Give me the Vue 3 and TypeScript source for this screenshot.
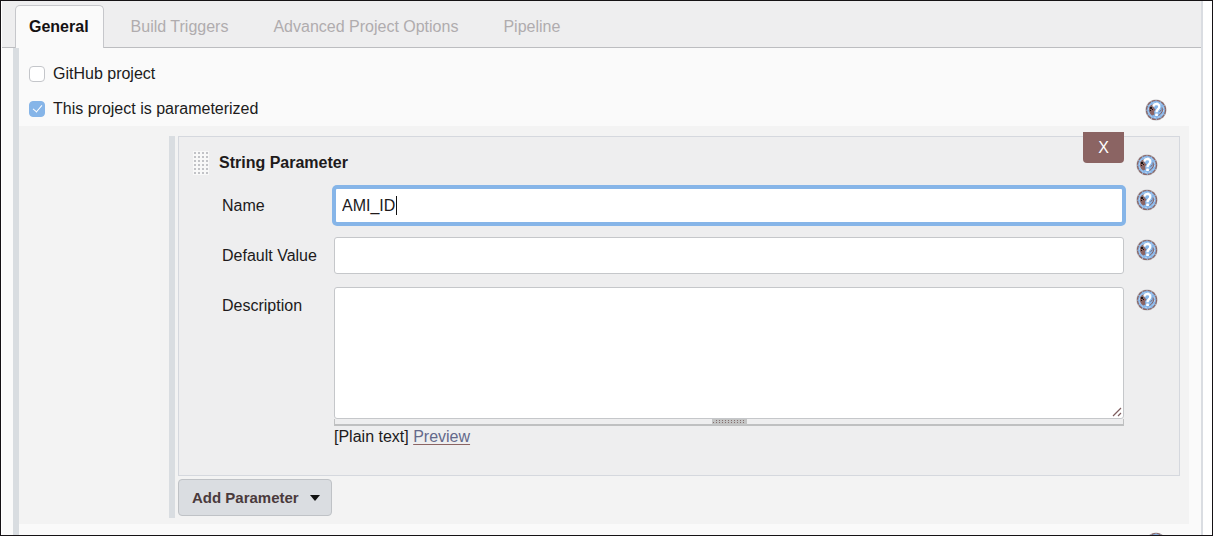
<script setup lang="ts">
import { ref } from 'vue'

interface Tab {
  id: string
  label: string
}

const tabs: Tab[] = [
  { id: 'general', label: 'General' },
  { id: 'triggers', label: 'Build Triggers' },
  { id: 'advanced', label: 'Advanced Project Options' },
  { id: 'pipeline', label: 'Pipeline' },
]

const activeTab = ref('general')
const githubProject = ref(false)
const parameterized = ref(true)
const paramName = ref('AMI_ID')
const defaultValue = ref('')
const description = ref('')
</script>

<template>
  <div class="window">
    <svg class="sprite" aria-hidden="true">
      <symbol id="help-icon" viewBox="0 0 22 22">
        <circle cx="11" cy="11" r="10.6" fill="#b9b9be" />
        <circle cx="11" cy="11" r="9.5" fill="#86b5e8" />
        <circle cx="11" cy="11" r="9.5" fill="none" stroke="#8b6463" stroke-width="1.2" stroke-dasharray="4 1" />
        <circle cx="11" cy="11" r="7.6" fill="none" stroke="#c9dcf2" stroke-width=".8" stroke-dasharray="2 2" />
        <path d="M4 8.5 6 6 9.5 5.5 8.5 8.5 10.5 10.5 9 12.5 9.5 15.5 7 16.5 5 14.5 4 12Z" fill="#8b6463" />
        <path d="M5 8h2v2H5zM7 7h1v1H7zM7 10h1v1H7zM5 11h1v1H5z" fill="#1c1618" />
        <path d="M17 8.5 17.5 12 15.5 15 13.5 16.5M14.5 12.5l2-1.5" fill="none" stroke="#8b6463" stroke-width="1" />
        <path d="M8.4 7.8C8.4 4 14.6 4.1 14.3 7.8 14.2 10.2 11.6 10.2 11.5 13.2" fill="none" stroke="#fff" stroke-width="2.4" />
        <rect x="10.2" y="14.4" width="2.7" height="2.7" rx=".6" fill="#fff" />
      </symbol>
    </svg>

    <main class="panel">
      <nav class="tabs" role="tablist">
        <button
          v-for="tab in tabs"
          :key="tab.id"
          type="button"
          role="tab"
          class="tab"
          :class="{ active: tab.id === activeTab }"
          :aria-selected="tab.id === activeTab"
          @click="activeTab = tab.id"
        >
          {{ tab.label }}
        </button>
      </nav>

      <form class="config" @submit.prevent>
        <div class="option">
          <label class="check"><input v-model="githubProject" type="checkbox" />GitHub project</label>
        </div>
        <div class="option">
          <label class="check"><input v-model="parameterized" type="checkbox" />This project is parameterized</label>
          <button type="button" class="help" aria-label="Help"><svg><use href="#help-icon" /></svg></button>
        </div>

        <section class="nested">
          <div class="params">
            <div class="param">
              <button type="button" class="delete">X</button>
              <header class="param-head">
                <svg class="drag" viewBox="0 0 16 24" aria-hidden="true">
                  <defs>
                    <pattern id="drag-dots" width="4" height="4" patternUnits="userSpaceOnUse">
                      <rect width="4" height="4" fill="#f8f8f8" />
                      <rect x="1" y="1" width="2" height="2" fill="#c2c3c7" />
                    </pattern>
                  </defs>
                  <rect width="16" height="24" fill="url(#drag-dots)" />
                </svg>
                <h2>String Parameter</h2>
                <button type="button" class="help" aria-label="Help"><svg><use href="#help-icon" /></svg></button>
              </header>

              <div class="row">
                <label for="param-name">Name</label>
                <div class="field">
                  <input id="param-name" v-model="paramName" class="text focused" type="text" />
                  <span class="caret"></span>
                </div>
                <button type="button" class="help" aria-label="Help"><svg><use href="#help-icon" /></svg></button>
              </div>
              <div class="row">
                <label for="param-default">Default Value</label>
                <div class="field">
                  <input id="param-default" v-model="defaultValue" class="text" type="text" />
                </div>
                <button type="button" class="help" aria-label="Help"><svg><use href="#help-icon" /></svg></button>
              </div>
              <div class="row">
                <label for="param-desc">Description</label>
                <div class="field">
                  <textarea id="param-desc" v-model="description"></textarea>
                  <svg class="corner" viewBox="0 0 10 10" aria-hidden="true">
                    <path d="M1 9 9 1M6 9 9 6" fill="none" stroke="#7d5c5e" stroke-width="1.2" />
                  </svg>
                  <div class="resizer">
                    <svg viewBox="0 0 35 6" aria-hidden="true">
                      <rect width="35" height="6" fill="#c3c4c4" />
                      <path d="M4 1.5H32M1 3.5H34" stroke="#85706f" stroke-dasharray="1 2" />
                    </svg>
                  </div>
                  <div class="markup">[Plain text] <a href="#preview">Preview</a></div>
                </div>
                <button type="button" class="help" aria-label="Help"><svg><use href="#help-icon" /></svg></button>
              </div>
            </div>

            <button type="button" class="add">
              Add Parameter
              <svg viewBox="0 0 10 6" aria-hidden="true"><path d="M0 0H10L5 6Z" fill="#111" /></svg>
            </button>
          </div>
        </section>

        <div class="option next">
          <button type="button" class="help" aria-label="Help"><svg><use href="#help-icon" /></svg></button>
        </div>
      </form>
    </main>
  </div>
</template>

<style>
body {
  margin: 0;
  background: #fff;
}
</style>

<style scoped>
* {
  box-sizing: border-box;
}
.window {
  height: 100vh;
  overflow: hidden;
  border: 1px solid #151215;
  padding: 0 9px 0 1px;
  background: #fff;
  color: #201a1b;
  font: 16px/20px "Liberation Sans", Arial, sans-serif;
}
.sprite {
  position: absolute;
  width: 0;
  height: 0;
}
button,
input,
textarea {
  margin: 0;
  font: inherit;
  color: inherit;
}
.panel {
  border-right: 2px solid #dadde2;
  background: #fafafa;
}
.tabs {
  display: flex;
  align-items: flex-end;
  height: 47px;
  padding-left: 13px;
  background: #eeeeef;
  border-bottom: 1px solid #bcbdc0;
}
.tab {
  height: 43px;
  margin-bottom: -1px;
  padding: 0 31px 0 14px;
  border: 0;
  background: none;
  color: #b0acae;
  white-space: nowrap;
}
.tab.active {
  margin-right: 13px;
  padding: 0 14px 0 13px;
  border: 1px solid #c6c7cb;
  border-bottom: 0;
  border-radius: 5px 5px 0 0;
  background: #fafafa;
  color: #141113;
  font-weight: bold;
}
.config {
  margin-left: 11px;
  padding-top: 8px;
  border-left: 6px solid #d9dde1;
}
.option {
  display: flex;
  align-items: center;
  justify-content: space-between;
  height: 35px;
  padding: 0 34px 0 10px;
}
.option .help {
  margin-top: 3px;
}
.check {
  display: flex;
  align-items: center;
  gap: 8px;
}
.check input {
  display: grid;
  place-items: center;
  width: 16px;
  height: 16px;
  appearance: none;
  border: 1px solid #c4c6ca;
  border-radius: 4px;
  background: #fff;
}
.check input:checked {
  border-color: #86b5e8;
  background: #86b5e8;
}
.check input:checked::after {
  content: "";
  width: 4px;
  height: 8px;
  margin-bottom: 2px;
  border: solid #fff;
  border-width: 0 1px 1px 0;
  transform: rotate(40deg);
}
.help {
  flex: none;
  width: 22px;
  height: 22px;
  padding: 0;
  border: 0;
  background: none;
}
.help svg {
  display: block;
  width: 22px;
  height: 22px;
}
.nested {
  margin-right: 12px;
  padding: 10px 9px 6px 150px;
  background: #f3f3f3;
}
.params {
  padding: 0 0 2px 3px;
  border-left: 6px solid #d9dde1;
}
.param {
  position: relative;
  display: flex;
  flex-direction: column;
  gap: 13px;
  padding: 15px 21px 28px 14px;
  border: 1px solid #d5d8de;
  background: #eeeeef;
}
.delete {
  position: absolute;
  top: -5px;
  right: 55px;
  width: 41px;
  height: 31px;
  padding: 0;
  border: 0;
  border-radius: 0 0 4px 4px;
  background: #8b6463;
  color: #fff;
}
.param-head {
  display: flex;
  align-items: center;
  gap: 10px;
  height: 22px;
}
.drag {
  width: 16px;
  height: 24px;
}
.param-head h2 {
  flex: 1;
  margin: 0;
  font-size: 16px;
}
.param-head .help {
  margin-top: 4px;
}
.row {
  display: flex;
  align-items: flex-start;
  padding-left: 29px;
}
.row label {
  width: 112px;
  padding-top: 9px;
}
.row .help {
  margin-top: 2px;
}
.field {
  position: relative;
  flex: 1;
  margin-right: 12px;
}
.text,
textarea {
  display: block;
  width: 100%;
  border: 1px solid #c5c7ca;
  border-radius: 3px;
  outline: none;
  background: #fff;
}
.text {
  height: 37px;
  padding: 0 7px;
}
.text.focused {
  border: 2px solid #86b5e8;
  padding: 0 6px;
  box-shadow: 0 0 0 2px #86b5e8;
}
.caret {
  position: absolute;
  left: 62px;
  top: 9px;
  width: 1px;
  height: 19px;
  background: #111;
}
textarea {
  height: 132px;
  padding: 8px;
  resize: none;
}
.corner {
  position: absolute;
  top: 120px;
  right: 2px;
  width: 10px;
  height: 10px;
}
.resizer {
  display: flex;
  justify-content: center;
  height: 7px;
  border: solid #bfc0c1;
  border-width: 0 1px 2px;
}
.resizer svg {
  width: 35px;
  height: 6px;
}
.markup {
  margin-top: 1px;
}
.markup a {
  color: #64698a;
  text-decoration-color: #8b6463;
  text-underline-offset: 2px;
}
.add {
  display: flex;
  align-items: center;
  gap: 11px;
  height: 37px;
  margin-top: 3px;
  padding: 0 11px 0 13px;
  border: 1px solid #bfc2c6;
  border-radius: 4px;
  background: #dadde1;
  color: #4a3a3c;
  font-size: 15px;
  font-weight: bold;
}
.add svg {
  width: 10px;
  height: 6px;
}
.next {
  justify-content: flex-end;
}
</style>
